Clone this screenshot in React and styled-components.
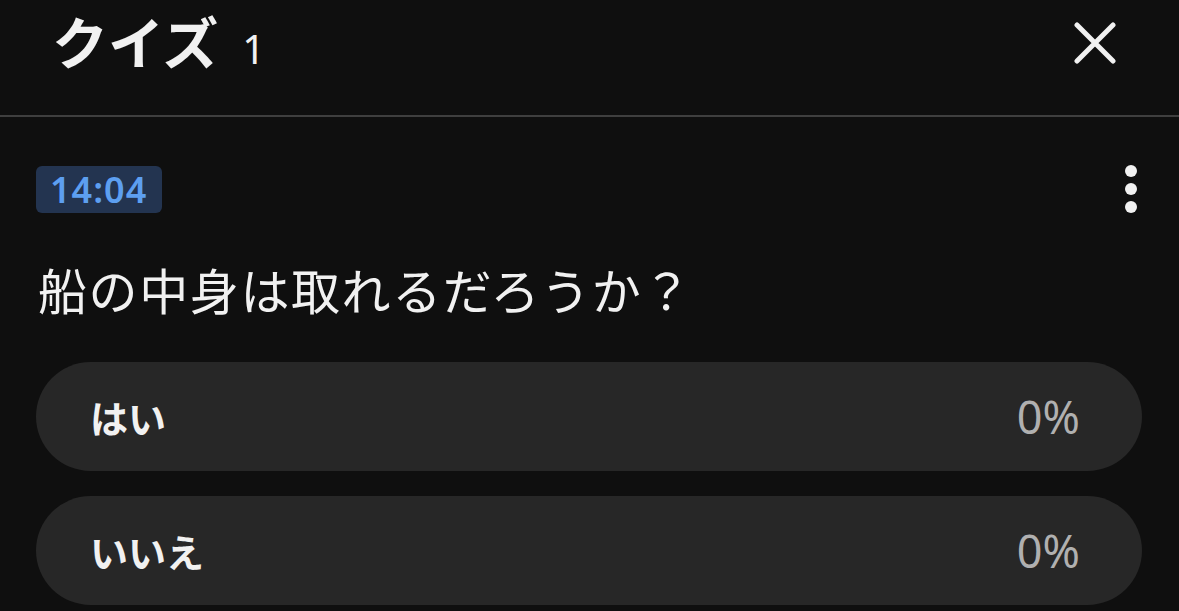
import React from "react";
import styled, { createGlobalStyle } from "styled-components";

const Global = createGlobalStyle`
  html, body {
    margin: 0;
    padding: 0;
    background: #0f0f0f;
  }
  body {
    font-family: "Noto Sans", "Noto Sans CJK JP", sans-serif;
    color: #f1f1f1;
  }
`;

const Page = styled.div`
  width: 1179px;
  height: 611px;
  overflow: hidden;
  background: #0f0f0f;
`;

const Header = styled.header`
  height: 117px;
  box-sizing: border-box;
  display: flex;
  align-items: flex-start;
  justify-content: space-between;
  padding: 8px 63px 0 52px;
  border-bottom: 2px solid #3f3f3f;
`;

const TitleWrap = styled.div`
  display: flex;
  align-items: baseline;
  gap: 24px;
`;

const Title = styled.h1`
  margin: 0;
  font-family: "Noto Sans CJK JP", sans-serif;
  font-size: 56px;
  line-height: 64px;
  font-weight: 700;
  color: #f1f1f1;
`;

const Count = styled.span`
  font-family: "Noto Sans", sans-serif;
  font-size: 40px;
  font-weight: 400;
  color: #f1f1f1;
`;

const IconButton = styled.button`
  background: none;
  border: 0;
  padding: 0;
  display: flex;
  color: #f1f1f1;
  margin-top: ${(p) => p.$offset || 0}px;
  margin-right: ${(p) => p.$right || 0}px;
`;

const Body = styled.main`
  padding: 47px 37px 0 36px;
`;

const MetaRow = styled.div`
  display: flex;
  align-items: center;
  justify-content: space-between;
`;

const TimeBadge = styled.span`
  display: inline-flex;
  align-items: center;
  height: 47px;
  padding: 0 15px 0 14px;
  border-radius: 6px;
  background: #233450;
  color: #5d9ff0;
  font-family: "Noto Sans", sans-serif;
  font-size: 36px;
  font-weight: 600;
  letter-spacing: 1px;
`;

const Question = styled.p`
  margin: 44px 0 0 2px;
  font-family: "Noto Sans CJK JP", sans-serif;
  font-size: 49px;
  line-height: 62px;
  font-weight: 400;
  letter-spacing: 1.6px;
  color: #f1f1f1;
`;

const Options = styled.div`
  display: flex;
  flex-direction: column;
  gap: 25px;
  margin-top: 42px;
`;

const Option = styled.div`
  height: 109px;
  border-radius: 55px;
  background: #272727;
  display: flex;
  align-items: center;
  justify-content: space-between;
  padding: 0 62px 0 54px;
`;

const OptionLabel = styled.span`
  font-family: "Noto Sans CJK JP", sans-serif;
  font-size: 38px;
  font-weight: 700;
  color: #f1f1f1;
`;

const Percent = styled.span`
  font-family: "Noto Sans", sans-serif;
  font-size: 45px;
  font-weight: 400;
  color: #b0b0b0;
`;

const CloseIcon = () => (
  <svg width="42" height="42" viewBox="0 0 42 42">
    <path
      d="M3 3 L39 39 M39 3 L3 39"
      stroke="currentColor"
      strokeWidth="5"
      strokeLinecap="round"
    />
  </svg>
);

const KebabIcon = () => (
  <svg width="14" height="50" viewBox="0 0 14 50">
    <circle cx="7" cy="7" r="6" fill="currentColor" />
    <circle cx="7" cy="25" r="6" fill="currentColor" />
    <circle cx="7" cy="43" r="6" fill="currentColor" />
  </svg>
);

const options = [
  { label: "はい", value: 0 },
  { label: "いいえ", value: 0 },
];

export default function App() {
  return (
    <Page>
      <Global />
      <Header>
        <TitleWrap>
          <Title>クイズ</Title>
          <Count>1</Count>
        </TitleWrap>
        <IconButton $offset={14}>
          <CloseIcon />
        </IconButton>
      </Header>
      <Body>
        <MetaRow>
          <TimeBadge>14:04</TimeBadge>
          <IconButton $right={4}>
            <KebabIcon />
          </IconButton>
        </MetaRow>
        <Question>船の中身は取れるだろうか？</Question>
        <Options>
          {options.map((o) => (
            <Option key={o.label}>
              <OptionLabel>{o.label}</OptionLabel>
              <Percent>{o.value}%</Percent>
            </Option>
          ))}
        </Options>
      </Body>
    </Page>
  );
}
